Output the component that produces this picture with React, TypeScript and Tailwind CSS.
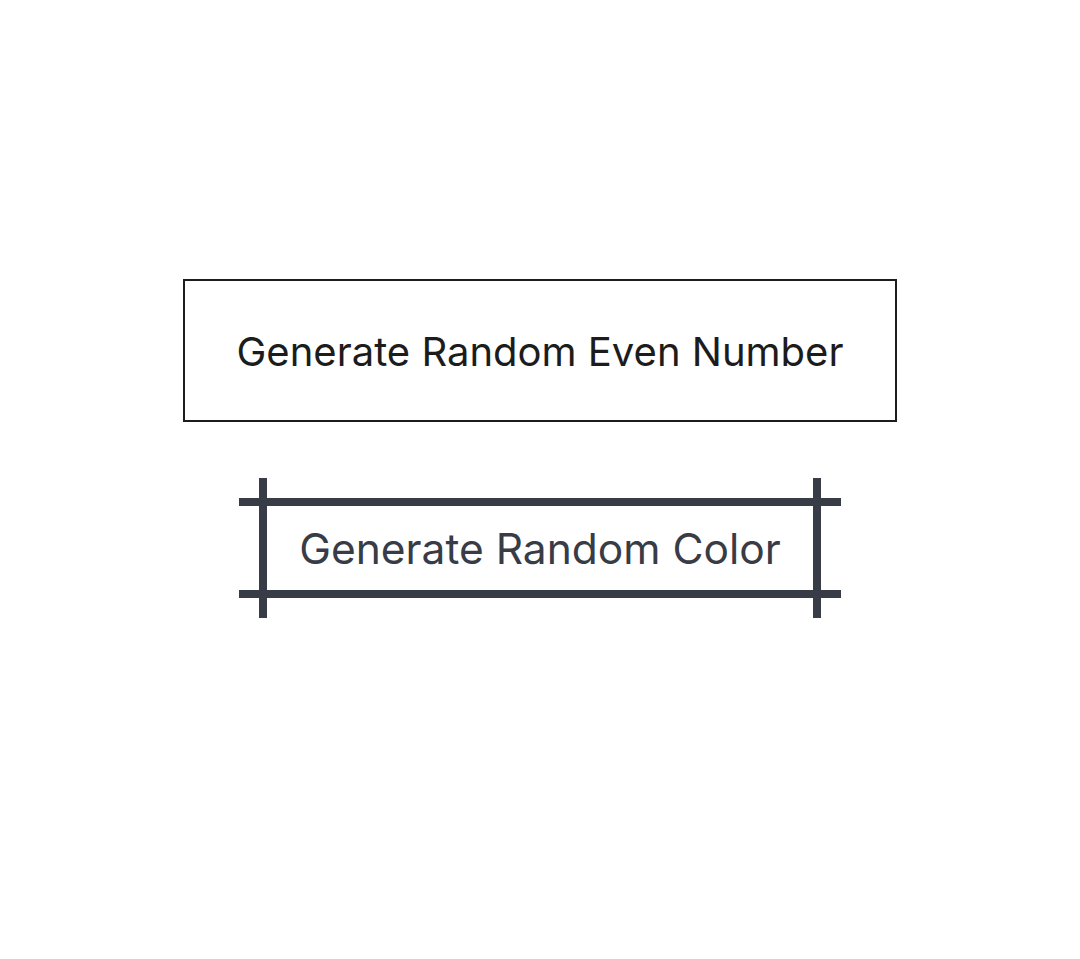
export default function App() {
  return (
    <div className="min-h-screen w-full bg-white flex flex-col items-center pt-[279px] font-['Inter',sans-serif]">
      <button className="w-[714px] h-[143px] border-2 border-[#1c1c1c] flex items-center justify-center pt-[2px] text-[40px] text-[#1c1c1c]">
        Generate Random Even Number
      </button>

      {/* sketch-style frame: side bars run past the top/bottom bars */}
      <div className="mt-[56px] w-[562px] border-x-8 border-[#383c47]">
        <button className="-mx-[28px] my-[20px] w-[602px] h-[100px] border-y-8 border-[#383c47] flex items-center justify-center pt-[2px] text-[42.5px] text-[#383c47]">
          Generate Random Color
        </button>
      </div>
    </div>
  );
}
